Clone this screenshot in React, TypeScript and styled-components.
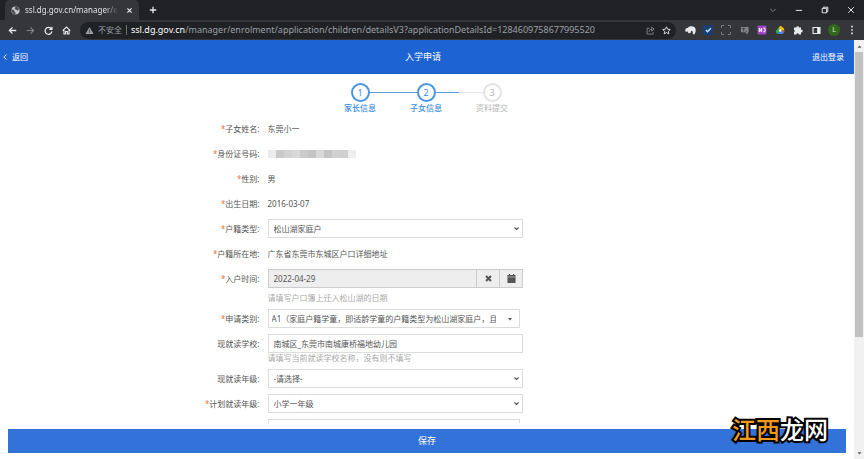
import React from "react";
import styled, { createGlobalStyle, css } from "styled-components";

const GlobalStyle = createGlobalStyle`
  * { box-sizing: border-box; }
  html, body, #root { height: 100%; }
  body {
    margin: 0;
    background: #fff;
    overflow: hidden;
  }
  body, button, input, select {
    font-family: "Noto Sans", "Noto Sans CJK SC", sans-serif;
    font-size: 8px;
    line-height: 12px;
    color: #555;
  }
  button { padding: 0; border: 0; background: none; cursor: pointer; }
  svg { display: block; flex: none; }
`;

const Window = styled.div`
  height: 100vh;
  display: flex;
  flex-direction: column;
`;

/* browser chrome */
const TabStrip = styled.div`
  display: flex;
  align-items: center;
  justify-content: space-between;
  height: 20px;
  flex: none;
  padding-left: 5px;
  background: #202124;
`;

const TabGroup = styled.div`
  display: flex;
  align-items: center;
  gap: 8px;
  height: 100%;
`;

const Tab = styled.div`
  display: flex;
  align-items: center;
  gap: 5px;
  width: 134px;
  height: 100%;
  padding: 0 4px 0 6px;
  border-radius: 5px 5px 0 0;
  background: #35363a;
`;

const TabTitle = styled.span`
  flex: 1;
  min-width: 0;
  overflow: hidden;
  white-space: nowrap;
  color: #dfe1e5;
  mask-image: linear-gradient(to right, #000 86%, transparent);
`;

const ChromeButton = styled.button<{ $dim?: boolean }>`
  display: flex;
  align-items: center;
  justify-content: center;
  width: 12px;
  height: 14px;
  flex: none;
  color: ${(p) => (p.$dim ? "#84868a" : "#e8eaed")};
`;

const WindowControls = styled.div`
  display: flex;
  gap: 14px;
  padding-right: 7px;
`;

const Toolbar = styled.div`
  display: flex;
  align-items: center;
  gap: 8px;
  height: 20px;
  flex: none;
  padding: 0 6px;
  background: #35363a;
`;

const NavButtons = styled.div`
  display: flex;
  gap: 6px;
`;

const Omnibox = styled.div`
  display: flex;
  align-items: center;
  flex: 1;
  min-width: 0;
  gap: 4px;
  height: 17px;
  padding: 0 4px 0 5px;
  border-radius: 9px;
  background: #202124;
  color: #9aa0a6;
  white-space: nowrap;
`;

const Insecure = styled.span`
  padding-right: 4px;
  border-right: 1px solid #6b6e72;
  line-height: 10px;
`;

const Url = styled.span`
  flex: 1;
  min-width: 0;
  overflow: hidden;
  font-size: 9px;
  b { font-weight: 400; color: #fff; }
`;

const Extensions = styled.div`
  display: flex;
  align-items: center;
  gap: 6px;
`;

const Avatar = styled.button`
  width: 12px;
  height: 12px;
  border-radius: 50%;
  background: #33691e;
  color: #e0ecd9;
  font-size: 7px;
`;

/* page */
const Viewport = styled.div`
  display: flex;
  flex: 1;
  min-height: 0;
`;

const Page = styled.div`
  display: flex;
  flex-direction: column;
  flex: 1;
  min-width: 0;
`;

const Header = styled.header`
  display: grid;
  grid-template-columns: 1fr auto 1fr;
  align-items: center;
  height: 34px;
  flex: none;
  padding: 0 10px 0 2px;
  background: #1d63d1;
  color: #fff;
`;

const Title = styled.h1`
  margin: 0;
  font-size: 9px;
  font-weight: 400;
`;

const HeaderLink = styled.a<{ $end?: boolean }>`
  display: flex;
  align-items: center;
  gap: 4px;
  justify-self: ${(p) => (p.$end ? "end" : "start")};
  color: #fff;
  text-decoration: none;
`;

const Content = styled.main`
  flex: 1;
  min-height: 0;
  overflow: hidden;
  padding-top: 9px;
`;

const Steps = styled.ol`
  display: flex;
  justify-content: center;
  margin: 0 0 5px;
  padding: 0 2px 0 0;
  list-style: none;
`;

const Step = styled.li<{ $done?: boolean }>`
  display: flex;
  flex-direction: column;
  align-items: center;
  width: 66px;
  color: ${(p) => (p.$done ? "#3a8ee0" : "#b5b5b5")};
  font-weight: ${(p) => (p.$done ? 500 : 400)};
`;

const StepTrack = styled.div`
  display: flex;
  align-items: center;
  width: 100%;
`;

const StepLine = styled.span<{ $tone: "none" | "blue" | "gray" }>`
  flex: 1;
  height: 1px;
  background: ${(p) => ({ none: "transparent", blue: "#5a9fe0", gray: "#e4e4e4" })[p.$tone]};
`;

const StepCircle = styled.span<{ $done?: boolean }>`
  display: flex;
  align-items: center;
  justify-content: center;
  width: 19px;
  height: 19px;
  border: 2px solid ${(p) => (p.$done ? "#4a96e2" : "#e4e4e4")};
  border-radius: 50%;
  font-size: 9px;
  font-weight: 400;
`;

const Form = styled.form`
  display: flex;
  flex-direction: column;
  gap: 6px;
`;

const Row = styled.div`
  display: grid;
  grid-template-columns: minmax(0, 262fr) minmax(0, 255fr) minmax(0, 329fr);
  column-gap: 8px;
  & > :nth-child(2) { margin-right: -3px; }
`;

const labelText = css<{ $required?: boolean }>`
  text-align: right;
  line-height: 19px;
  white-space: nowrap;
  &::before {
    content: ${(p) => (p.$required ? '"*"' : '""')};
    color: #e8743b;
  }
`;
const Label = styled.label<{ $required?: boolean }>`${labelText}`;
const Caption = styled.span<{ $required?: boolean }>`${labelText}`;

const Value = styled.div`
  display: flex;
  align-items: center;
  height: 19px;
`;

const Hint = styled.div<{ $spaced?: boolean }>`
  margin-top: ${(p) => (p.$spaced ? "5px" : "0")};
  line-height: 10px;
  color: #a9a9a9;
`;

const Control = styled.div`
  display: grid;
  align-items: center;
  & > * { grid-area: 1 / 1; }
  & > svg { justify-self: end; margin-right: 3px; pointer-events: none; }
`;

const box = css`
  width: 100%;
  height: 19px;
  margin: 0;
  border: 1px solid #dcdcdc;
  border-radius: 0;
  background: #fff;
  outline: none;
`;

const Select = styled.select`
  ${box}
  appearance: none;
  padding: 0 14px 0 5px;
`;

const TextInput = styled.input`
  ${box}
  padding: 0 5px;
`;

const DropButton = styled.button`
  ${box}
  display: flex;
  align-items: center;
  justify-content: space-between;
  padding: 0 6px 0 3px;
  white-space: nowrap;
`;

const DropText = styled.span`
  width: 224px;
  overflow: hidden;
  text-align: left;
`;

const DateGroup = styled.div`
  display: flex;
`;

const DateInput = styled(TextInput)`
  flex: 1;
  min-width: 0;
  background: #eee;
  border-color: #ccc;
`;

const AddonButton = styled.button`
  display: flex;
  align-items: center;
  justify-content: center;
  width: 23px;
  height: 19px;
  border: 1px solid #ccc;
  border-left: 0;
  background: #eee;
`;

const Masked = styled.span`
  display: flex;
  height: 8px;
`;

const MaskBlock = styled.i<{ $shade: string }>`
  width: 8px;
  background: ${(p) => p.$shade};
`;

const Footer = styled.footer`
  position: relative;
  flex: none;
  padding: 6px 8px;
`;

const SaveButton = styled.button`
  display: block;
  width: 100%;
  height: 24px;
  background: #3272d9;
  color: #fff;
  font-size: 9px;
`;

const Watermark = styled.div`
  position: absolute;
  right: 26px;
  bottom: 13px;
  color: #fff;
  font-size: 24px;
  font-weight: 500;
  line-height: 32px;
  -webkit-text-stroke: 4px #000;
  paint-order: stroke fill;
  pointer-events: none;
  span { color: #f39a1e; }
`;

const Scrollbar = styled.div`
  display: flex;
  flex-direction: column;
  align-items: center;
  width: 10px;
  flex: none;
  padding: 4px 0 3px;
  gap: 3px;
  background: #f1f1f1;
`;

const ScrollTrack = styled.div`
  flex: 1;
  width: 8px;
`;

const ScrollThumb = styled.div`
  height: 72%;
  background: #c1c1c1;
`;

type IconProps = { d: string; size?: number; fill?: boolean; width?: number };
const Icon = ({ d, size = 10, fill, width = 1.2 }: IconProps) => (
  <svg width={size} height={size} viewBox="0 0 10 10" fill={fill ? "currentColor" : "none"}
    stroke={fill ? "none" : "currentColor"} strokeWidth={width} aria-hidden="true">
    <path d={d} />
  </svg>
);

const Chevron = () => <Icon d="M2 3.6 5 6.4 8 3.6" size={7} width={1.6} />;

const maskShades = ["#ececec", "#c9c9c9", "#d2d2d2", "#d8d8d8", "#cccccc", "#c4c4c4", "#d9d9d9", "#c5c5c5", "#d0d0d0", "#cfcfcf", "#efefef"];

export default function App() {
  return (
    <Window>
      <GlobalStyle />
      <TabStrip>
        <TabGroup>
          <Tab>
            <svg width="9" height="9" viewBox="0 0 10 10" aria-hidden="true">
              <circle cx="5" cy="5" r="4.5" fill="#c4c7cb" />
              <path d="M1 3.6 3.8 5v1.2L5 7.3V9.4A4.5 4.5 0 0 1 1 3.6M4 .8l1 1.4-1.4 1L5.4 4l1.8 1.2L8.6 4 8.9 3A4.6 4.6 0 0 0 4 .8" fill="#4a4b4f" />
            </svg>
            <TabTitle>ssl.dg.gov.cn/manager/enrolment</TabTitle>
            <ChromeButton aria-label="关闭标签页"><Icon d="M2 2 8 8M8 2 2 8" size={7} width={1.6} /></ChromeButton>
          </Tab>
          <ChromeButton aria-label="新标签页"><Icon d="M5 1V9M1 5H9" size={8} width={1.6} /></ChromeButton>
        </TabGroup>
        <WindowControls>
          <ChromeButton $dim aria-label="搜索标签页"><Icon d="M1.5 3.5 5 7 8.5 3.5" size={8} /></ChromeButton>
          <ChromeButton aria-label="最小化"><Icon d="M1 5.5H9" size={8} /></ChromeButton>
          <ChromeButton aria-label="还原"><Icon d="M1.5 3H7V8.5H1.5ZM3 3V1.5H8.5V7H7" size={8} /></ChromeButton>
          <ChromeButton aria-label="关闭"><Icon d="M1.5 1.5 8.5 8.5M8.5 1.5 1.5 8.5" size={8} /></ChromeButton>
        </WindowControls>
      </TabStrip>
      <Toolbar>
        <NavButtons>
          <ChromeButton aria-label="后退"><Icon d="M9.2 5H1.5M5 1.5 1.5 5 5 8.5" size={9} width={1.4} /></ChromeButton>
          <ChromeButton $dim aria-label="前进"><Icon d="M.8 5H8.5M5 1.5 8.5 5 5 8.5" size={9} /></ChromeButton>
          <ChromeButton aria-label="刷新"><Icon d="M8.2 3.3A3.8 3.8 0 1 0 8.8 6M8.8 .8V3.8H5.8" size={9} width={1.4} /></ChromeButton>
          <ChromeButton aria-label="主页"><Icon d="M.8 5.2 5 1.2 9.2 5.2M2.2 4.4V8.9H4V6.2H6V8.9H7.8V4.4" size={9} /></ChromeButton>
        </NavButtons>
        <Omnibox>
          <Icon d="M5 1 9.5 9H.5ZM4.6 3.8V6.3H5.4V3.8ZM4.6 7V7.9H5.4V7Z" size={9} fill />
          <Insecure>不安全</Insecure>
          <Url><b>ssl.dg.gov.cn</b>/manager/enrolment/application/children/detailsV3?applicationDetailsId=1284609758677995520</Url>
          <ChromeButton $dim aria-label="分享"><Icon d="M4 2.5H1.2V9H8V6.8M3.4 6.5C3.6 4.4 5 3.5 7 3.5M6.3 1.3 9 3.5 6.3 5.7Z" size={9} width={1} /></ChromeButton>
          <ChromeButton aria-label="收藏"><Icon d="M5 .9 6.2 3.6 9.2 3.9 7 5.9 7.6 8.8 5 7.3 2.4 8.8 3 5.9 .8 3.9 3.8 3.6Z" size={9} width={1} /></ChromeButton>
        </Omnibox>
        <Extensions>
          <ChromeButton aria-label="笔记"><Icon d="M.3 4.4C.5 2.6 2 3 3 2.2 4.5.7 8.8.8 9.6 3.6 10 5.4 9.5 7 8.6 8.4L7 8.5C7.4 6.7 7 5 5.6 5.2L5 7.3 3 7.5 2.8 6 .4 6.2Z" size={11} fill /></ChromeButton>
          <ChromeButton aria-label="任务">
            <svg width="10" height="10" viewBox="0 0 10 10"><rect width="10" height="10" rx="2" fill="#173f73" /><path d="M2.8 5 4.6 6.8 7.8 3.2" fill="none" stroke="#c8e2ff" strokeWidth="1.4" /></svg>
          </ChromeButton>
          <ChromeButton $dim aria-label="截图"><Icon d="M.5 3V.5H3M7 .5H9.5V3M9.5 7V9.5H7M3 9.5H.5V7" size={10} width={0.8} /></ChromeButton>
          <ChromeButton aria-label="翻译">
            <svg width="9" height="9" viewBox="0 0 10 10"><path d="M1 1H9.5V6.5L8 9.5 6 7H1Z" fill="#85878a" /><path d="M2 3H6M4 2V6M6 5 8 7" stroke="#3d3e42" fill="none" /></svg>
          </ChromeButton>
          <ChromeButton aria-label="剪藏">
            <svg width="10" height="10" viewBox="0 0 10 10"><rect x=".5" y=".5" width="9" height="9" rx="1" fill="#9a45c0" /><path d="M2.3 7V3L4.6 7V3M6.3 3.2H8V6.8H6.3" stroke="#fff" fill="none" /></svg>
          </ChromeButton>
          <ChromeButton aria-label="云端硬盘">
            <svg width="10" height="10" viewBox="0 0 10 10"><path d="M5 1 1 5.5A3 3 0 0 0 3 9L5 5.5Z" fill="#34a853" /><path d="M5 1C7.5 1.5 9 3 9.5 5.6H6L4 3Z" fill="#fbbc04" /><path d="M3 9 4.5 6H9.5L8 9Z" fill="#4285f4" /><path d="M7.4 6H9.6L8.4 8.6Z" fill="#ea4335" /><circle cx="5.2" cy="5.6" r="1.3" fill="#fff" /></svg>
          </ChromeButton>
          <ChromeButton aria-label="扩展程序"><Icon d="M1 2.6H3.4A1.3 1.3 0 1 1 6 2.6H8V4.8A1.3 1.3 0 1 1 8 7.3V9.4H5.8A1.2 1.2 0 0 0 3.4 9.4H1V7A1.2 1.2 0 0 0 1 4.8Z" fill /></ChromeButton>
          <ChromeButton aria-label="侧边栏"><Icon d="M.5 1H9.5V9H.5ZM1.8 2.3V7.7H5.7V2.3Z" size={9} fill /></ChromeButton>
          <Avatar>L</Avatar>
          <ChromeButton aria-label="菜单"><Icon d="M4.2 .8H5.8V2.4H4.2ZM4.2 4.2H5.8V5.8H4.2ZM4.2 7.6H5.8V9.2H4.2Z" fill /></ChromeButton>
        </Extensions>
      </Toolbar>

      <Viewport>
        <Page>
          <Header>
            <HeaderLink href="#back"><Icon d="M7.5 .8 3 5 7.5 9.2" size={6} width={1.4} />返回</HeaderLink>
            <Title>入学申请</Title>
            <HeaderLink href="#logout" $end>退出登录</HeaderLink>
          </Header>

          <Content>
            <Steps>
              <Step $done>
                <StepTrack><StepLine $tone="none" /><StepCircle $done>1</StepCircle><StepLine $tone="blue" /></StepTrack>
                家长信息
              </Step>
              <Step $done>
                <StepTrack><StepLine $tone="blue" /><StepCircle $done>2</StepCircle><StepLine $tone="blue" /></StepTrack>
                子女信息
              </Step>
              <Step>
                <StepTrack><StepLine $tone="gray" /><StepCircle>3</StepCircle><StepLine $tone="none" /></StepTrack>
                资料提交
              </Step>
            </Steps>

            <Form id="child" onSubmit={(e) => e.preventDefault()}>
              <Row><Caption $required>子女姓名:</Caption><Value>东莞小一</Value></Row>
              <Row>
                <Caption $required>身份证号码:</Caption>
                <Value><Masked>{maskShades.map((s, i) => <MaskBlock key={i} $shade={s} />)}</Masked></Value>
              </Row>
              <Row><Caption $required>性别:</Caption><Value>男</Value></Row>
              <Row><Caption $required>出生日期:</Caption><Value>2016-03-07</Value></Row>
              <Row>
                <Label htmlFor="household" $required>户籍类型:</Label>
                <Control>
                  <Select id="household"><option>松山湖家庭户</option></Select>
                  <Chevron />
                </Control>
              </Row>
              <Row><Caption $required>户籍所在地:</Caption><Value>广东省东莞市东城区户口详细地址</Value></Row>
              <Row>
                <Label htmlFor="moved" $required>入户时间:</Label>
                <div>
                  <DateGroup>
                    <DateInput id="moved" readOnly value="2022-04-29" />
                    <AddonButton type="button" aria-label="清除"><Icon d="M1.5 1.5 8.5 8.5M8.5 1.5 1.5 8.5" size={7} width={3} /></AddonButton>
                    <AddonButton type="button" aria-label="选择日期"><Icon d="M.5 1H2V0H3.4V1H6.6V0H8V1H9.5V10H.5ZM1 3V3.5H9V3Z" size={9} fill /></AddonButton>
                  </DateGroup>
                  <Hint $spaced>请填写户口簿上迁入松山湖的日期</Hint>
                </div>
              </Row>
              <Row>
                <Label htmlFor="category" $required>申请类别:</Label>
                <DropButton id="category" type="button">
                  <DropText>A1（家庭户籍学童，即适龄学童的户籍类型为松山湖家庭户，且</DropText>
                  <Icon d="M1.5 3.5H8.5L5 7.5Z" size={6} fill />
                </DropButton>
              </Row>
              <Row>
                <Label htmlFor="school">现就读学校:</Label>
                <div>
                  <TextInput id="school" defaultValue="南城区_东莞市南城康桥福地幼儿园" />
                  <Hint>请填写当前就读学校名称，没有则不填写</Hint>
                </div>
              </Row>
              <Row>
                <Label htmlFor="grade">现就读年级:</Label>
                <Control>
                  <Select id="grade"><option>-请选择-</option></Select>
                  <Chevron />
                </Control>
              </Row>
              <Row>
                <Label htmlFor="planned" $required>计划就读年级:</Label>
                <Control>
                  <Select id="planned"><option>小学一年级</option></Select>
                  <Chevron />
                </Control>
              </Row>
              <Row><span /><TextInput aria-label="其他信息" /></Row>
            </Form>
          </Content>

          <Footer>
            <SaveButton type="submit" form="child">保存</SaveButton>
            <Watermark><span>江西</span>龙网</Watermark>
          </Footer>
        </Page>
        <Scrollbar>
          <Icon d="M1 7.5 5 3 9 7.5Z" size={5} fill />
          <ScrollTrack><ScrollThumb /></ScrollTrack>
          <Icon d="M1 2.5 5 7 9 2.5Z" size={5} fill />
        </Scrollbar>
      </Viewport>
    </Window>
  );
}
